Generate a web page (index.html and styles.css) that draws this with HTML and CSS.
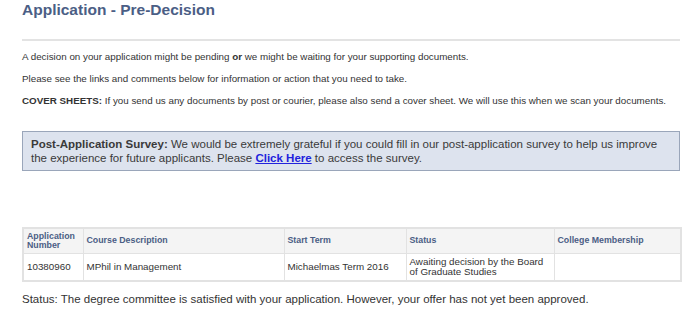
FILE: index.html
```html
<!DOCTYPE html>
<html lang="en">

<head>
    <meta charset="UTF-8">
    <title>Application - Pre-Decision</title>
    <link rel="stylesheet" href="styles.css">
</head>

<body>
    <section id='page'>
        <h1 class='page-title'>Application - Pre-Decision</h1>
        <hr class='rule'>
        <p class='note'>A decision on your application might be pending <b>or</b> we might be waiting for your supporting documents.</p>
        <p class='note'>Please see the links and comments below for information or action that you need to take.</p>
        <p class='note'><b>COVER SHEETS:</b> If you send us any documents by post or courier, please also send a cover sheet. We will use this when we scan your documents.</p>

        <div class='survey'>
            <b>Post-Application Survey:</b> We would be extremely grateful if you could fill in our post-application survey to help us improve<br>
            the experience for future applicants. Please <a href="#">Click Here</a> to access the survey.
        </div>

        <table class='apps'>
            <colgroup>
                <col style="width: 60px">
                <col style="width: 201px">
                <col style="width: 122px">
                <col style="width: 148px">
                <col style="width: 127px">
            </colgroup>
            <tr>
                <th>Application Number</th>
                <th>Course Description</th>
                <th>Start Term</th>
                <th>Status</th>
                <th>College Membership</th>
            </tr>
            <tr>
                <td>10380960</td>
                <td>MPhil in Management</td>
                <td>Michaelmas Term 2016</td>
                <td>Awaiting decision by the Board of Graduate Studies</td>
                <td></td>
            </tr>
        </table>

        <p class='status'>Status: The degree committee is satisfied with your application. However, your offer has not yet been approved.</p>
    </section>
</body>

</html>
```

FILE: styles.css
```css
* {
    margin: 0;
    padding: 0;
    box-sizing: border-box;
}

body {
    font-family: "Liberation Sans", Arial, sans-serif;
    color: #333;
    background: #fff;
}

#page {
    width: 680px;
    padding-left: 22px;
}

.page-title {
    font-size: 15.5px;
    line-height: 20px;
    color: #4b5e85;
}

.rule {
    border: none;
    border-top: 2px solid #e3e3e3;
    margin-top: 19px;
    height: 0;
}

.note {
    font-size: 9.8px;
    line-height: 22px;
    margin-top: 0;
}

.rule + .note {
    margin-top: 5px;
}

.survey {
    margin-top: 19px;
    height: 40px;
    padding: 5px 8px;
    background: #dde3ee;
    border: 1px solid #9aa6ba;
    font-size: 11.5px;
    line-height: 14px;
    color: #3a3a3a;
    white-space: nowrap;
}

.survey a {
    color: #2222dd;
    font-weight: bold;
}

.apps {
    margin-top: 56px;
    width: 658px;
    table-layout: fixed;
    border-collapse: collapse;
    border: 2px solid #e2e2e2;
}

.apps th,
.apps td {
    border: 1px solid #e2e2e2;
    padding: 0 3px;
    text-align: left;
    vertical-align: middle;
}

.apps th {
    background: #f4f4f4;
    color: #4b5e85;
    font-size: 8.8px;
    line-height: 9px;
    height: 25px;
}

.apps td {
    font-size: 9.8px;
    line-height: 10px;
    height: 28px;
    color: #333;
}

.status {
    font-size: 11.5px;
    line-height: 14px;
    margin-top: 10px;
}
```
